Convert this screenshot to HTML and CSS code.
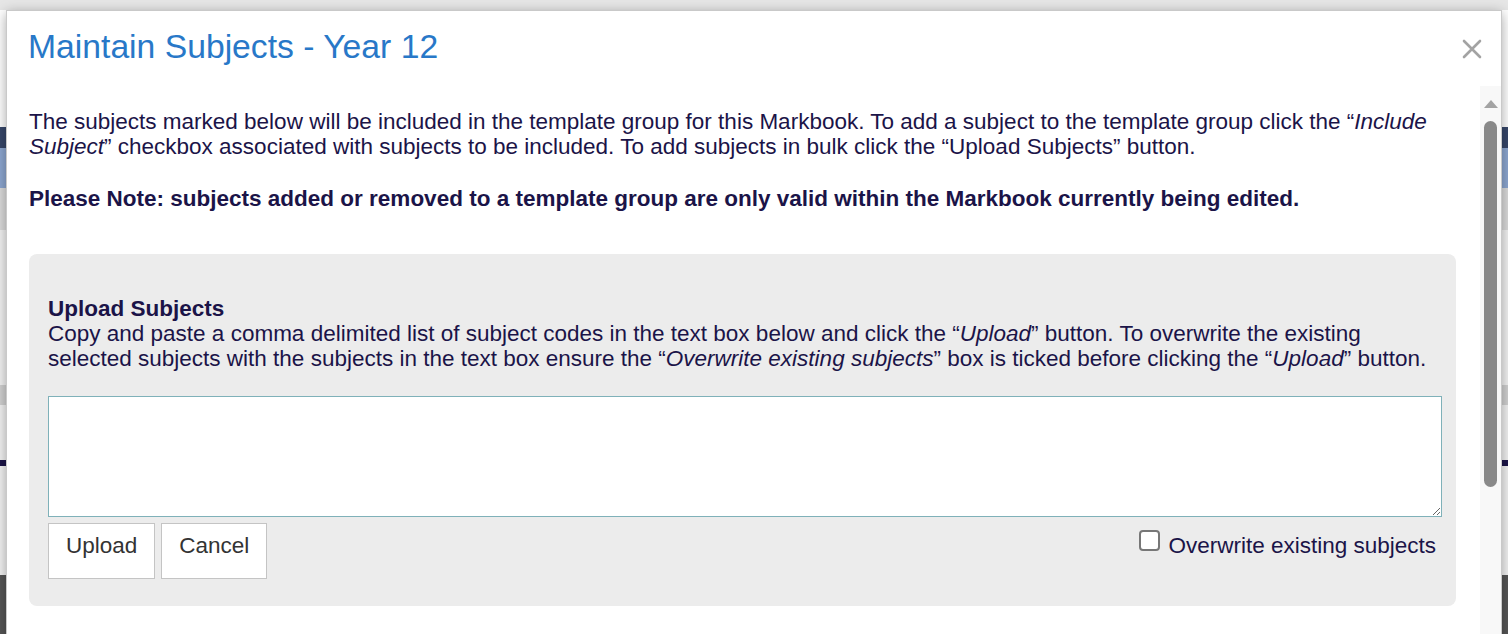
FILE: index.html
```html
<!DOCTYPE html>
<html lang="en">
<head>
    <meta charset="UTF-8">
    <meta name="viewport" content="width=device-width, initial-scale=1.0">
    <title>Maintain Subjects</title>
    <link rel="stylesheet" href="styles.css">
</head>
<body>
    <!-- page behind the dialog -->
    <div class="page">
        <div class="page-top"></div>
        <div class="page-head"></div>
        <div class="page-nav"></div>
        <div class="page-subnav"></div>
        <div class="page-bar"></div>
        <div class="page-content"></div>
        <div class="page-row"></div>
        <div class="page-content short"></div>
        <div class="page-rule"></div>
        <div class="page-content tall"></div>
        <div class="page-footer"></div>
    </div>

    <div class="modal">
        <div class="modal-header">
            <h4 class="modal-title">Maintain Subjects - Year 12</h4>
            <button class="close-btn" aria-label="Close">
                <svg width="20" height="20" viewBox="0 0 20 20">
                    <path d="M2 2 L18 18 M18 2 L2 18" stroke="#a3a3a3" stroke-width="2.6" stroke-linecap="round"/>
                </svg>
            </button>
        </div>

        <div class="modal-body">
            <div class="modal-content">
                <p class="intro">The subjects marked below will be included in the template group for this Markbook. To add a subject to the template group click the &ldquo;<i>Include Subject</i>&rdquo; checkbox associated with subjects to be included. To add subjects in bulk click the &ldquo;Upload Subjects&rdquo; button.</p>
                <p class="note">Please Note: subjects added or removed to a template group are only valid within the Markbook currently being edited.</p>

                <div class="upload-panel">
                    <p class="upload-text"><b>Upload Subjects</b><br>
                    Copy and paste a comma delimited list of subject codes in the text box below and click the &ldquo;<i>Upload</i>&rdquo; button. To overwrite the existing selected subjects with the subjects in the text box ensure the &ldquo;<i>Overwrite existing subjects</i>&rdquo; box is ticked before clicking the &ldquo;<i>Upload</i>&rdquo; button.</p>

                    <textarea id="subjectCodes" class="codes"></textarea>

                    <div class="upload-actions">
                        <button class="btn">Upload</button>
                        <button class="btn">Cancel</button>
                        <label class="overwrite">
                            <input type="checkbox" id="overwrite">
                            <span>Overwrite existing subjects</span>
                        </label>
                    </div>
                </div>
            </div>

            <div class="scrollbar">
                <div class="scroll-arrow"></div>
                <div class="scroll-thumb"></div>
            </div>
        </div>
    </div>
</body>
</html>
```

FILE: styles.css
```css
body {
    font-family: "Liberation Sans", Arial, sans-serif;
    margin: 0;
    height: 634px;
    overflow: hidden;
    background: #fff;
    color: #1b1448;
}

/* background page */
.page-top {
    height: 10px;
    background: #e6e6e6;
}

.page-head {
    height: 117px;
    background: #fff;
}

.page-nav {
    height: 21px;
    background: #37476a;
}

.page-subnav {
    height: 40px;
    background: #8da7d1;
}

.page-bar {
    height: 42px;
    background: #dcdcdc;
}

.page-content {
    height: 155px;
    background: #f3f3f3;
}

.page-content.short {
    height: 55px;
}

.page-content.tall {
    height: 109px;
}

.page-row {
    height: 20px;
    background: #d2d2d2;
}

.page-rule {
    height: 6px;
    background: #1b1448;
}

.page-footer {
    height: 60px;
    background: #565656;
}

/* dialog */
.modal {
    position: absolute;
    top: 10px;
    left: 6px;
    width: 1496px;
    height: 700px;
    box-sizing: border-box;
    background: #fff;
    border: 1px solid #c9c9c9;
    box-shadow: 0 3px 12px rgba(0, 0, 0, 0.35);
    display: flex;
    flex-direction: column;
}

.modal-header {
    display: flex;
    justify-content: space-between;
    align-items: flex-start;
    height: 75px;
    box-sizing: border-box;
    padding: 16px 19px 0 21px;
}

.modal-title {
    margin: 0;
    font-size: 33.7px;
    font-weight: normal;
    line-height: 38px;
    color: #2878c8;
}

.close-btn {
    background: none;
    border: none;
    padding: 0;
    margin-top: 12px;
    width: 20px;
    height: 20px;
    cursor: pointer;
}

.close-btn svg {
    display: block;
}

.modal-body {
    flex: 1;
    display: flex;
    min-height: 0;
}

.modal-content {
    flex: 1;
    padding: 23px 24px 0 22px;
}

.intro,
.note {
    font-size: 22.5px;
    line-height: 25px;
    margin: 0 0 27px;
}

.note {
    font-weight: bold;
    margin-bottom: 43px;
}

.upload-panel {
    background: #ececec;
    border-radius: 8px;
    padding: 42px 14px 27px 19px;
}

.upload-text {
    margin: 0 0 25px;
    font-size: 22.5px;
    line-height: 25px;
}

.codes {
    display: block;
    width: 100%;
    height: 121px;
    box-sizing: border-box;
    margin: 0 0 6px;
    border: 1px solid #7fb1b9;
    border-radius: 0;
    background: #fff;
    font-family: inherit;
    font-size: 18px;
}

.upload-actions {
    display: flex;
    align-items: flex-start;
    gap: 6px;
}

.btn {
    background: #fff;
    color: #333;
    border: 1px solid #c4c4c4;
    border-radius: 0;
    padding: 9px 17px 20px;
    font-family: inherit;
    font-size: 22.5px;
    line-height: 25px;
    cursor: pointer;
}

.overwrite {
    margin-left: auto;
    margin-right: 6px;
    display: flex;
    align-items: flex-start;
    gap: 8px;
    font-size: 22.5px;
    line-height: 25px;
    padding-top: 10px;
}

.overwrite input {
    appearance: none;
    -webkit-appearance: none;
    width: 21px;
    height: 21px;
    box-sizing: border-box;
    margin: -3px 0 0;
    border: 2px solid #777;
    border-radius: 4px;
    background: #fff;
}

/* scrollbar of the dialog body */
.scrollbar {
    width: 21px;
    background: #f8f8f8;
    display: flex;
    flex-direction: column;
    align-items: center;
}

.scroll-arrow {
    width: 0;
    height: 0;
    margin-top: 14px;
    border-left: 7px solid transparent;
    border-right: 7px solid transparent;
    border-bottom: 8px solid #a3a3a3;
}

.scroll-thumb {
    width: 13px;
    height: 366px;
    margin-top: 13px;
    border-radius: 7px;
    background: #898989;
}
```
